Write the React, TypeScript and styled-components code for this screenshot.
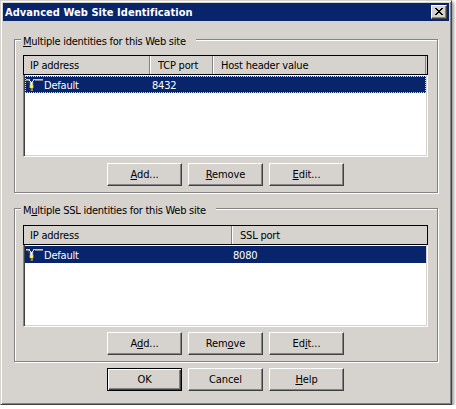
import React, { FC, ReactNode } from "react";
import styled, { createGlobalStyle } from "styled-components";

const GlobalStyle = createGlobalStyle`
  body {
    margin: 0;
    background: #fff;
    overflow: hidden;
  }
`;

const Dialog = styled.div`
  box-sizing: border-box;
  width: 452px;
  height: 405px;
  padding: 1px;
  border: 1px solid;
  border-color: #d6d3ce #424142 #424142 #d6d3ce;
  box-shadow: inset 1px 1px #fff, inset -1px -1px #848284, 2px 2px 3px rgba(0, 0, 0, 0.4);
  background: #d6d3ce;
  color: #000;
  font: 11px/13px "DejaVu Sans Condensed", "Liberation Sans", sans-serif;
  cursor: default;
`;

const TitleBar = styled.div`
  display: flex;
  align-items: center;
  justify-content: space-between;
  height: 18px;
  margin: 1px;
  padding: 0 2px;
  background: #08246b;
  color: #fff;
  font-weight: bold;
`;

const Text = styled.span<{ $spacing?: number }>`
  letter-spacing: ${({ $spacing = -0.2 }) => $spacing}px;
  white-space: pre;
`;

const AccessKey = styled.span`
  text-decoration: underline 1px;
  text-decoration-skip-ink: none;
  text-underline-offset: 1px;
`;

const CloseButton = styled.button`
  display: flex;
  align-items: center;
  justify-content: center;
  box-sizing: border-box;
  width: 16px;
  height: 14px;
  padding: 0 1px 1px 0;
  border: 1px solid;
  border-color: #fff #424142 #424142 #fff;
  box-shadow: inset -1px -1px #848284;
  background: #d6d3ce;
`;

const Frame = styled.div<{ $top: number }>`
  box-sizing: border-box;
  width: 424px;
  height: 154px;
  margin: ${({ $top }) => $top}px 0 0 12px;
  padding-left: 8px;
  border: 1px solid #848284;
  box-shadow: inset 1px 1px #fff, 1px 1px #fff;
`;

const Legend = styled.div<{ $width: number }>`
  box-sizing: border-box;
  width: ${({ $width }) => $width}px;
  height: 15px;
  margin: -6px 0 0 -2px;
  padding: 1px 0 0 2px;
  background: #d6d3ce;
`;

const ListView = styled.div<{ $top: number }>`
  box-sizing: border-box;
  width: 405px;
  height: 102px;
  margin-top: ${({ $top }) => $top}px;
  border: 1px solid;
  border-color: #848284 #fff #fff #848284;
  box-shadow: inset 1px 1px #424142, inset -1px -1px #d6d3ce;
  background: #fff;
`;

const Header = styled.div`
  box-sizing: border-box;
  display: flex;
  width: 405px;
  height: 20px;
  margin: -1px 0 0 -1px;
  border: 1px solid #000;
  background: #d6d3ce;
`;

const HeaderCell = styled.div<{ $width: number; $last?: boolean }>`
  box-sizing: border-box;
  width: ${({ $width }) => $width}px;
  padding: 3px 0 0 8px;
  border-right: ${({ $last }) => ($last ? "0" : "1px solid #848284")};
  box-shadow: inset 1px 0 #fff;

  &:first-child {
    padding-left: 6px;
    box-shadow: none;
  }
`;

const Row = styled.div<{ $focused?: boolean }>`
  box-sizing: border-box;
  display: flex;
  width: 401px;
  height: 17px;
  margin: 1px 0 0 1px;
  border: 1px ${({ $focused }) => ($focused ? "dotted #f7db94" : "solid #08246b")};
  background: #08246b;
  color: #fff;
  line-height: 17px;
`;

const RowName = styled.div<{ $width: number }>`
  display: flex;
  width: ${({ $width }) => $width}px;

  svg {
    margin-top: 1px;
  }
`;

const Buttons = styled.div<{ $top: number; $left: number }>`
  display: flex;
  gap: 6px;
  margin: ${({ $top, $left }) => `${$top}px 0 0 ${$left}px`};
`;

const PushButton = styled.button<{ $primary?: boolean }>`
  box-sizing: border-box;
  width: 75px;
  height: 23px;
  padding: 0 0 1px;
  border: 1px solid;
  border-color: ${({ $primary }) => ($primary ? "#000" : "#fff #424142 #424142 #fff")};
  box-shadow: ${({ $primary }) =>
    $primary ? "inset 1px 1px #fff, inset -1px -1px #424142, inset -2px -2px #848284" : "inset -1px -1px #848284"};
  background: #d6d3ce;
  color: #000;
  font: inherit;
  letter-spacing: -0.1px;
`;

const SiteIcon: FC = () => (
  <svg width="18" height="13" viewBox="0 0 18 13" shapeRendering="crispEdges">
    <path d="M0 1h4v1H0zM7 1h10v1H7z" fill="#c6c3c6" />
    <path d="M0 2h3v1H0zM9 2h8v1H9z" fill="#848284" />
    <path d="M3 2h1v1h1v1h1V3h1V2h1v1H7v1H6v3H5V4H4V3H3z" fill="#fff" />
    <path d="M2 3h1v1h1v3H3V5H2zM7 4h1v3H7z" fill="#424142" />
    <path d="M4 4h1v3H4zM6 4h1v3H6z" fill="#c6c3c6" />
    <path d="M3 7h1v3H3zM7 7h1v3H7z" fill="#636163" />
    <path d="M4 7h3v3H4z" fill="#ffeb29" />
    <path d="M5 8h1v1H5z" fill="#fff" />
    <path d="M4 10h1v3H4z" fill="#424142" />
    <path d="M5 10h2v3H5z" fill="#848284" />
  </svg>
);

type Column = { title: string; width: number };

type IdentityListProps = {
  columns: Column[];
  port: string;
  portOffset: number;
  top: number;
  focused?: boolean;
};

const IdentityList: FC<IdentityListProps> = ({ columns, port, portOffset, top, focused }) => (
  <ListView $top={top}>
    <Header>
      {columns.map(({ title, width }, index) => (
        <HeaderCell key={title} $width={width} $last={!focused && index === columns.length - 1}>
          <Text>{title}</Text>
        </HeaderCell>
      ))}
    </Header>
    <Row $focused={focused}>
      <RowName $width={portOffset}>
        <SiteIcon />
        <Text>Default</Text>
      </RowName>
      <Text>{port}</Text>
    </Row>
  </ListView>
);

type IdentityGroupProps = {
  label: ReactNode;
  labelWidth: number;
  top: number;
  children: ReactNode;
};

const IdentityGroup: FC<IdentityGroupProps> = ({ label, labelWidth, top, children }) => (
  <Frame $top={top}>
    <Legend $width={labelWidth}>
      <Text $spacing={-0.25}>{label}</Text>
    </Legend>
    {children}
  </Frame>
);

const App: FC = () => (
  <>
    <GlobalStyle />
    <Dialog>
      <TitleBar>
        <Text $spacing={0.05}>Advanced Web Site Identification</Text>
        <CloseButton aria-label="Close">
          <svg width="8" height="7" viewBox="0 0 8 7" shapeRendering="crispEdges">
            <path d="M0 0h2v1h1v1h2V1h1V0h2v1H7v1H6v1H5v1h1v1h1v1h1v1H6V6H5V5H3v1H2v1H0V6h1V5h1V4h1V3H2V2H1V1H0z" />
          </svg>
        </CloseButton>
      </TitleBar>
      <IdentityGroup
        top={18}
        labelWidth={175}
        label={
          <>
            <AccessKey>M</AccessKey>ultiple identities for this Web site
          </>
        }
      >
        <IdentityList
          columns={[
            { title: "IP address", width: 126 },
            { title: "TCP port", width: 63 },
            { title: "Host header value", width: 213 }
          ]}
          port="8432"
          portOffset={126}
          top={6}
          focused
        />
        <Buttons $top={6} $left={84}>
          <PushButton>
            <AccessKey>A</AccessKey>dd...
          </PushButton>
          <PushButton>
            <AccessKey>R</AccessKey>emove
          </PushButton>
          <PushButton>
            <AccessKey>E</AccessKey>dit...
          </PushButton>
        </Buttons>
      </IdentityGroup>
      <IdentityGroup
        top={15}
        labelWidth={195}
        label={
          <>
            M<AccessKey>u</AccessKey>ltiple SSL identities for this Web site
          </>
        }
      >
        <IdentityList
          columns={[
            { title: "IP address", width: 208 },
            { title: "SSL port", width: 195 }
          ]}
          port="8080"
          portOffset={207}
          top={7}
        />
        <Buttons $top={5} $left={84}>
          <PushButton>
            A<AccessKey>d</AccessKey>d...
          </PushButton>
          <PushButton>
            Rem<AccessKey>o</AccessKey>ve
          </PushButton>
          <PushButton>
            Ed<AccessKey>i</AccessKey>t...
          </PushButton>
        </Buttons>
      </IdentityGroup>
      <Buttons $top={6} $left={105}>
        <PushButton $primary>OK</PushButton>
        <PushButton>Cancel</PushButton>
        <PushButton>
          <AccessKey>H</AccessKey>elp
        </PushButton>
      </Buttons>
    </Dialog>
  </>
);

export default App;
